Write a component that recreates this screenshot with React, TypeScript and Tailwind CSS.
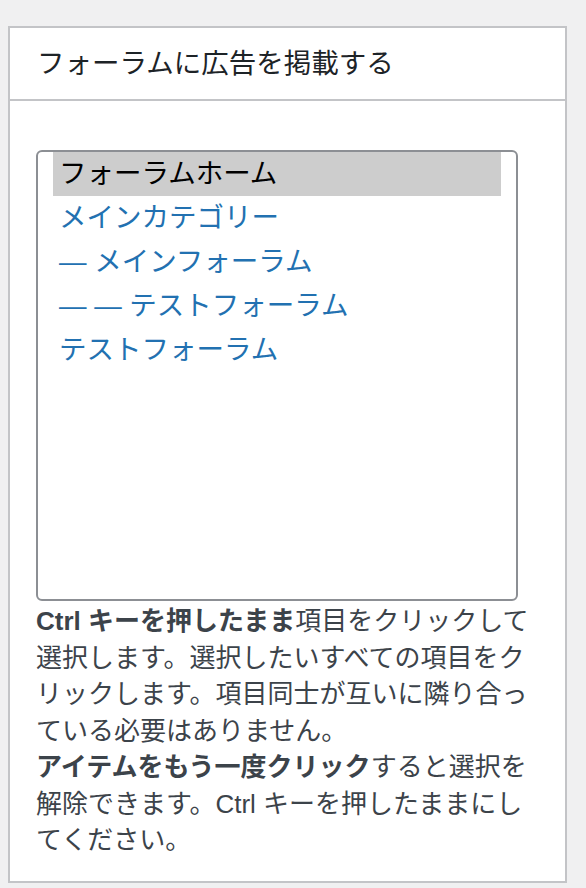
import React from "react";

const font = { fontFamily: '"Liberation Sans", "Noto Sans CJK JP", sans-serif' };

export default function App() {
  const options = [
    { label: "フォーラムホーム", selected: true },
    { label: "メインカテゴリー" },
    { label: "— メインフォーラム" },
    { label: "— — テストフォーラム" },
    { label: "テストフォーラム" },
  ];
  return (
    <div
      className="min-h-screen bg-[#f0f0f1] pt-[26px] pl-[8px] pr-[19px] pb-[6px]"
      style={font}
    >
      <div className="border-2 border-[#c3c4c7] bg-white">
        <div className="h-[73px] border-b-2 border-[#c3c4c7] flex items-center pl-[27px] text-[27.5px] text-[#1d2327] leading-none">
          フォーラムに広告を掲載する
        </div>
        <div className="pl-[26px] pr-[20px] pt-[49px] pb-[22px]">
          <div className="w-[482px] h-[451px] border-2 border-[#8c8f94] rounded-[6px] px-[15px] pt-0">
            {options.map((o) => (
              <div
                key={o.label}
                className={
                  o.selected
                    ? "h-[44px] flex items-center pl-[6px] bg-[#cdcdcd] text-[#000] text-[27.5px] whitespace-nowrap"
                    : "h-[44px] flex items-center pl-[6px] text-[#2271b1] text-[27.5px] whitespace-nowrap"
                }
              >
                {o.label}
              </div>
            ))}
          </div>
          <div className="pt-[2px] text-[26px] leading-[36.5px] text-[#3c434a] whitespace-nowrap">
            <div>
              <b>Ctrl キーを押したまま</b>項目をクリックして
            </div>
            <div>選択します。選択したいすべての項目をク</div>
            <div>リックします。項目同士が互いに隣り合っ</div>
            <div>ている必要はありません。</div>
            <div>
              <b>アイテムをもう一度クリック</b>すると選択を
            </div>
            <div>解除できます。Ctrl キーを押したままにし</div>
            <div>てください。</div>
          </div>
        </div>
      </div>
    </div>
  );
}
